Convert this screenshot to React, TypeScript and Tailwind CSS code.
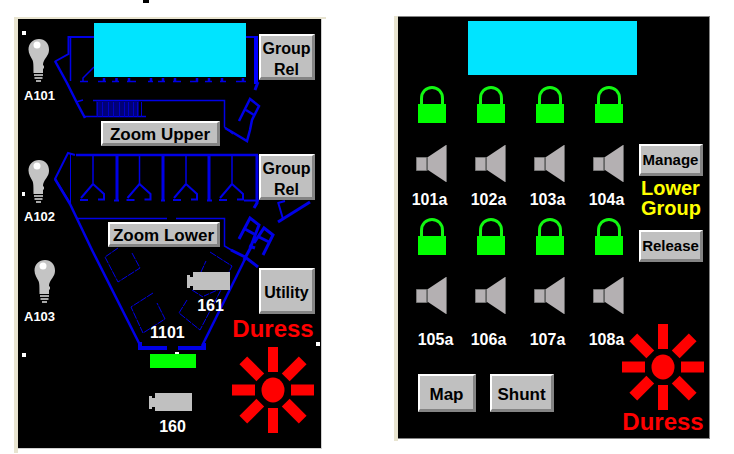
import type { ReactNode } from "react";

const bevel =
  "flex items-center justify-center border-t-2 border-l-2 border-r-3 border-b-3 border-t-white border-l-white border-r-[#848484] border-b-[#848484] bg-[#c0c0c0] text-center font-bold text-black whitespace-nowrap";

function PanelButton({ className, children }: { className: string; children: ReactNode }) {
  return (
    <button type="button" className={`${bevel} ${className}`}>
      {children}
    </button>
  );
}

function Bulb() {
  return (
    <svg width="22" height="43" viewBox="0 0 22 43" aria-hidden="true">
      <path
        d="M11 0C5 0 .5 4.500 .5 10.500C.5 15 3 18 4.500 21C5.500 23.500 5.500 27 5.500 34H15V30L16 29V27L15 26C15 23 16 22 17 20C19 17 21 15 21 10.500C21 4.500 17 0 11 0Z"
        fill="#c4c4c4"
      />
      <path d="M6 36H15M6.500 39H14.500M8 42H13" stroke="#a8a8a8" strokeWidth="2" />
      <circle cx="9" cy="6" r="3.500" fill="#fff" />
    </svg>
  );
}

function Camera() {
  return (
    <svg width="43" height="18" viewBox="0 0 43 18" aria-hidden="true">
      <path d="M6 0H43V18H6V14H3V16H0V3H3V5H6Z" fill="#c0c0c0" />
    </svg>
  );
}

function Burst() {
  return (
    <svg width="84" height="86" viewBox="-42 -43 84 86" aria-hidden="true" className="shrink-0">
      <ellipse rx="11.500" ry="12.500" fill="#f00" />
      <g fill="#f00">
        <rect x="-5" y="-43" width="10" height="25" />
        <rect x="-5" y="18" width="10" height="25" />
        <rect x="-41" y="-5.500" width="23" height="11" />
        <rect x="18" y="-5.500" width="23" height="11" />
      </g>
      {[45, 135, 225, 315].map((angle) => (
        <rect key={angle} x="-5.500" y="-42" width="11" height="24" fill="#f00" transform={`rotate(${angle})`} />
      ))}
    </svg>
  );
}

function Lock() {
  return (
    <svg width="28" height="37" viewBox="0 0 28 37" aria-hidden="true">
      <path d="M3.500 19V12.500C3.500 6 8 1.500 14 1.500S24.500 6 24.500 12.500V19" fill="none" stroke="#12f812" strokeWidth="3" />
      <rect y="18" width="28" height="19" fill="#0f0" />
    </svg>
  );
}

function Speaker() {
  return (
    <svg width="31" height="37" viewBox="0 0 31 37" aria-hidden="true">
      <path d="M.5 12.500H10.500V25.500H.5Z" fill="#b4b0b2" stroke="#777" />
      <path d="M12 12L30 0V37L12 25Z" fill="#b4b0b2" />
      <path d="M11.500 12V25.500M30.500 0V37" stroke="#666" />
    </svg>
  );
}

function FloorPlan() {
  return (
    <svg
      width="303"
      height="429"
      viewBox="18 19 303 429"
      className="absolute inset-0"
      fill="none"
      stroke="#0000e6"
      role="img"
      aria-label="Floor plan"
    >
      {/* upper tier */}
      <path d="M68 37H94M246 37H257" strokeWidth="2" />
      <path d="M68.500 36V54L55 61.500" strokeWidth="2" />
      <path d="M70.500 37V81M94 67L83 78V82" strokeWidth="1.500" />
      <path d="M55 61L67 83L77 103L85 118" strokeWidth="2.500" />
      <path d="M85 116.500H146M76 102L83 100M93 100.500H224.500V127L233 134" strokeWidth="1.500" />
      <path d="M256 36V84" strokeWidth="4" stroke="#00f" />
      <path d="M258 82L255 90" strokeWidth="3" />
      <path
        d="M80 81.500H88M98 81.500H106M112 81.500H119M127 81.500H136M148 81.500H153M158 81.500H165M173 81.500H181M190 81.500H198M205 81.500H212M220 81.500H226M236 81.500H246"
        strokeWidth="1.500"
      />
      <path d="M104 78V82M116.500 78V82M129 78V82M151 78V82M163 78V82M175 78V82M197 78V82M209 78V82M222 78V82M243 78V82" strokeWidth="2.500" />
      <rect x="96" y="101" width="43" height="15" fill="#000078" stroke="none" />
      <path
        d="M97.500 102V117M102.500 102V117M108.500 102V117M113.500 102V117M119.500 102V117M124.500 102V117M128.500 102V117M133.500 102V117M137.500 102V117M141.500 102V117"
        stroke="#0000c8"
      />
      <path d="M239 121L250 99L259 106L252 120L250 130L247 141L232 132L225 128M246 110L254 115" strokeWidth="2.500" />

      {/* middle tier */}
      <path d="M76 155H258" strokeWidth="2.500" />
      <path d="M75 155L68 153L55 179L70 203" strokeWidth="2" />
      <path d="M70.500 154V203" />
      <path d="M55 179L70 204L92 250L139 343" strokeWidth="2.500" />
      {[93, 139.5, 186, 232].map((x) => (
        <g key={x} transform={`translate(${x} 0)`}>
          <path d="M0 155V184" strokeWidth="1.500" />
          <path d="M0 184L-12 198M0 184L11 194V199M-13 200H-5M5 199.500H12" strokeWidth="2" />
        </g>
      ))}
      <path d="M117 155V200M163 155V200M209 155V200M257 155V203L254 208" strokeWidth="3" />
      <path d="M114 200.500H119M161 200.500H165M207 200.500H212M244 200.500H259" strokeWidth="2" />
      <path d="M77 218.500H167M176 218.500H224.500V246L233 251" strokeWidth="1.500" />
      <path
        d="M239 239L250 218L259 225L251 246M245 229L254 234M254 243L264 228L273 235L263 255M259 237L269 242M249 246L255 248"
        strokeWidth="3"
      />
      <path d="M231 250L245 257L258 267M251 247L244 260" strokeWidth="3" />
      <path d="M246 257L202 346" strokeWidth="2.500" />
      <path d="M278 202L283 219M278 203L285 201" strokeWidth="2" />
      <path d="M278 222L310 202" strokeWidth="3" />

      {/* day room */}
      <path d="M140 342V348H167M178 348H204V343" strokeWidth="4" />
      <g strokeDasharray="7 1">
        <path d="M118 248L105 257L118 282L140 268L132 253" />
        <path d="M153 293L131 307L143 333L165 319L157 303" />
        <path d="M187 300L179 313L200 330L222 288L204 296M192 290L203 297" />
        <path d="M201 272L206 261M210 252L232 266L229 272" />
      </g>

      {/* registration marks */}
      <g fill="#fff" stroke="none">
        <rect x="22" y="31" width="4" height="4" />
        <rect x="22" y="192" width="3" height="4" />
        <rect x="22" y="353" width="4" height="4" />
        <rect x="316" y="342" width="4" height="4" />
        <rect x="175" y="352" width="4" height="2" />
      </g>
    </svg>
  );
}

const bulbs = [
  { name: "A101", place: "left-1.5 top-[20px]", icon: "ml-1" },
  { name: "A102", place: "left-1.5 top-[141px]", icon: "ml-1" },
  { name: "A103", place: "left-1.5 top-[241px]", icon: "ml-2.5" },
];

const stations = [
  [
    { name: "101a", shift: "pr-1" },
    { name: "102a", shift: "pr-1" },
    { name: "103a", shift: "pr-1" },
    { name: "104a", shift: "pr-1" },
  ],
  [
    { name: "105a", shift: "pl-2" },
    { name: "106a", shift: "pr-1" },
    { name: "107a", shift: "pr-1" },
    { name: "108a", shift: "pr-1" },
  ],
];

function MapPanel() {
  return (
    <section aria-label="Map" className="mt-px w-[312px] shrink-0 border-t-2 border-l-4 border-[#e8e4d0] pb-1">
      <div className="relative h-[430px] w-[304px] border-r border-b border-[#d0d0d0] bg-black">
        <FloorPlan />
        <div className="absolute top-1 left-[76px] h-[54px] w-[152px] bg-[#00e4ff]" />

        {bulbs.map((b) => (
          <div key={b.name} className={`absolute flex flex-col items-start ${b.place}`}>
            <span className={b.icon}>
              <Bulb />
            </span>
            <span className="mt-1.5 text-[13px] leading-4 font-bold text-white">{b.name}</span>
          </div>
        ))}

        <PanelButton className="absolute top-[15px] left-[241px] h-[46px] w-[56px] pt-1 text-[16px] leading-[21px]">
          Group
          <br />
          Rel
        </PanelButton>
        <PanelButton className="absolute top-[135px] left-[241px] h-[46px] w-[56px] pt-1 text-[16px] leading-[21px]">
          Group
          <br />
          Rel
        </PanelButton>
        <PanelButton className="absolute top-[102px] left-[83px] h-[25px] w-[119px] pt-1 text-[17px] leading-5">
          Zoom Upper
        </PanelButton>
        <PanelButton className="absolute top-[203px] left-[90px] h-[25px] w-[112px] pt-1 text-[17px] leading-5">
          Zoom Lower
        </PanelButton>
        <PanelButton className="absolute top-[249px] left-[241px] h-[46px] w-[56px] pt-1 text-[16px] leading-[21px]">
          Utility
        </PanelButton>

        <div className="absolute top-[253px] left-[169px] flex flex-col items-center text-[16px] leading-5 font-bold text-white">
          <Camera />
          <span className="mt-1.5 pl-1">161</span>
        </div>
        <div className="absolute top-[374px] left-[131px] flex flex-col items-center text-[16px] leading-5 font-bold text-white">
          <Camera />
          <span className="mt-1.5 pl-1">160</span>
        </div>
        <div className="absolute top-[304px] left-[132px] flex flex-col items-start gap-[11px] text-[16px] leading-5 font-bold text-white">
          <span>1101</span>
          <span className="h-[14px] w-[46px] bg-[#0f0]" />
        </div>

        <div className="absolute top-[298px] left-[213px] flex flex-col items-center gap-1.5 text-[24px] leading-6 font-bold text-[#f00]">
          <span>Duress</span>
          <Burst />
        </div>
      </div>
    </section>
  );
}

function StationPanel() {
  return (
    <section aria-label="Stations" className="min-w-[316px] flex-1 border-l-4 border-[#e8e4d0] pb-0.5">
      <div className="border-t border-r border-b border-[#848484] bg-black pb-1 pl-1">
        <div className="mt-1 ml-[66px] h-[54px] w-[169px] bg-[#00e4ff]" />
        <div className="mt-[11px] flex">
          <div className="flex-1">
            <div className="grid grid-cols-4 gap-y-2 text-[16px] leading-5 font-bold text-white">
              {stations.map((row, r) =>
                row.map((s) => (
                  <div key={s.name} className="flex flex-col items-center">
                    <Lock />
                    <span className="mt-[22px]">
                      <Speaker />
                    </span>
                    <span className={`${r === 0 ? "mt-2" : "mt-4"} ${s.shift}`}>{s.name}</span>
                  </div>
                )),
              )}
            </div>
            <div className="mt-6 flex gap-3.5 pl-4">
              <PanelButton className="h-[38px] w-[58px] pt-1 text-[17px] leading-5">Map</PanelButton>
              <PanelButton className="h-[38px] w-[64px] pt-1 text-[17px] leading-5">Shunt</PanelButton>
            </div>
          </div>

          <div className="flex w-[71px] flex-col items-end pt-[58px] pr-1">
            <PanelButton className="mr-0.5 h-8 w-16 text-[15px] leading-5">Manage</PanelButton>
            <h2 className="mt-0.5 mr-1 text-[20px] leading-5 font-bold text-[#ff0]">
              Lower
              <br />
              Group
            </h2>
            <PanelButton className="mt-3 mr-0.5 h-8 w-16 text-[15px] leading-5">Release</PanelButton>
            <div className="mt-[62px] flex shrink-0 flex-col items-center text-[24px] leading-6 font-bold text-[#f00]">
              <Burst />
              <span>Duress</span>
            </div>
          </div>
        </div>
      </div>
    </section>
  );
}

export default function App() {
  return (
    <main className="min-h-screen bg-white font-['Liberation_Sans',Arial,sans-serif]">
      <div className="h-4 pl-[143px]">
        <div className="h-[3px] w-1.5 bg-black" />
      </div>
      <div className="flex items-start gap-[68px] pr-6 pl-3.5">
        <MapPanel />
        <StationPanel />
      </div>
    </main>
  );
}
